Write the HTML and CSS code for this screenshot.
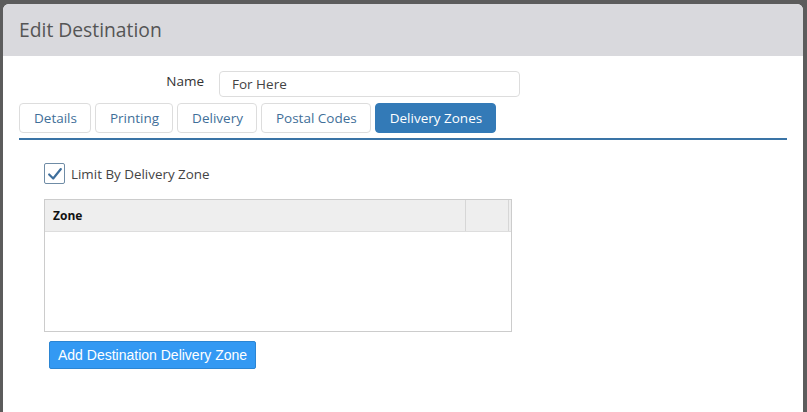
FILE: index.html
```html
<!DOCTYPE html>
<html lang="en">
<head>
  <meta charset="UTF-8">
  <title>Edit Destination</title>
  <link rel="stylesheet" href="styles.css">
</head>
<body>
  <div class="modal">
    <div class="modal-header">Edit Destination</div>

    <div class="modal-body">
      <div class="name-row">
        <label class="name-label" for="dest-name">Name</label>
        <input class="name-input" id="dest-name" type="text" value="For Here">
      </div>

      <ul class="tabs">
        <li class="tab">Details</li>
        <li class="tab">Printing</li>
        <li class="tab">Delivery</li>
        <li class="tab">Postal Codes</li>
        <li class="tab active">Delivery Zones</li>
      </ul>

      <div class="panel">
        <label class="check">
          <span class="check-box">
            <svg viewBox="0 0 20 20" width="18" height="18">
              <path d="M3.5 10.5 L8 15 L16.5 4.5" fill="none" stroke="#3f6f9c" stroke-width="2.4" stroke-linecap="round" stroke-linejoin="round"/>
            </svg>
          </span>
          Limit By Delivery Zone
        </label>

        <div class="grid">
          <div class="grid-head">
            <div class="col-zone">Zone</div>
            <div class="col-extra"></div>
          </div>
          <div class="grid-body"></div>
        </div>

        <button class="add-btn">Add Destination Delivery Zone</button>
      </div>
    </div>
  </div>
</body>
</html>
```

FILE: styles.css
```css
html, body {
  height: 100%;
}

body {
  margin: 0;
  padding: 4px 4px 0 3px;
  box-sizing: border-box;
  background: #5c5c5c;
  font-family: 'Open Sans', 'Segoe UI', sans-serif;
  overflow: hidden;
}

.modal {
  background: #fff;
  border-radius: 6px 6px 0 0;
  height: 100%;
  overflow: hidden;
}

.modal-header {
  background: #d9d9dd;
  height: 52px;
  padding-left: 16px;
  display: flex;
  align-items: center;
  font-size: 19.3px;
  color: #555;
  padding-bottom: 1px;
  box-sizing: border-box;
}

.modal-body {
  padding: 15px 16px 0;
}

.name-row {
  display: flex;
  align-items: flex-start;
}

.name-label {
  width: 185px;
  text-align: right;
  padding-right: 15px;
  font-size: 13.5px;
  color: #333;
  line-height: 20px;
}

.name-input {
  width: 301px;
  height: 26px;
  box-sizing: border-box;
  border: 1px solid #ddd;
  border-radius: 4px;
  padding: 0 12px;
  font-family: inherit;
  font-size: 13.5px;
  color: #444;
  margin: 0;
}

.tabs {
  list-style: none;
  margin: 6px 0 0;
  padding: 0 0 5px;
  display: flex;
  gap: 4px;
  border-bottom: 2px solid #3a74a6;
}

.tab {
  height: 30px;
  box-sizing: border-box;
  border: 1px solid #ddd;
  border-radius: 4px;
  padding: 0 13px 0 14px;
  display: flex;
  align-items: center;
  font-size: 13.5px;
  color: #3f6f99;
}

.tab.active {
  background: #337ab7;
  border-color: #337ab7;
  color: #fff;
}

.panel {
  padding: 23px 0 0 25px;
}

.check {
  display: flex;
  align-items: center;
  gap: 6px;
  font-size: 13.4px;
  color: #444;
}

.check-box {
  width: 21px;
  height: 21px;
  box-sizing: border-box;
  border: 1px solid #6f8ca6;
  border-radius: 2px;
  display: flex;
  align-items: center;
  justify-content: center;
}

.grid {
  margin-top: 15px;
  width: 468px;
  border: 1px solid #ccc;
  box-sizing: border-box;
}

.grid-head {
  display: flex;
  height: 31px;
  background: #eee;
  border-bottom: 1px solid #ddd;
  padding-right: 2px;
}

.col-zone {
  flex: 1;
  padding-left: 8px;
  display: flex;
  align-items: center;
  font-size: 12px;
  font-weight: bold;
  color: #111;
  border-right: 1px solid #d6d6d6;
}

.col-extra {
  width: 42px;
  border-right: 1px solid #d6d6d6;
}

.grid-body {
  height: 99px;
}

.add-btn {
  margin: 9px 0 0 5px;
  height: 28px;
  padding: 0 8px;
  background: #3399f3;
  border: 1px solid #2b85d3;
  border-radius: 2px;
  color: #fff;
  font-family: 'Liberation Sans', Arial, sans-serif;
  font-size: 14px;
}
```
